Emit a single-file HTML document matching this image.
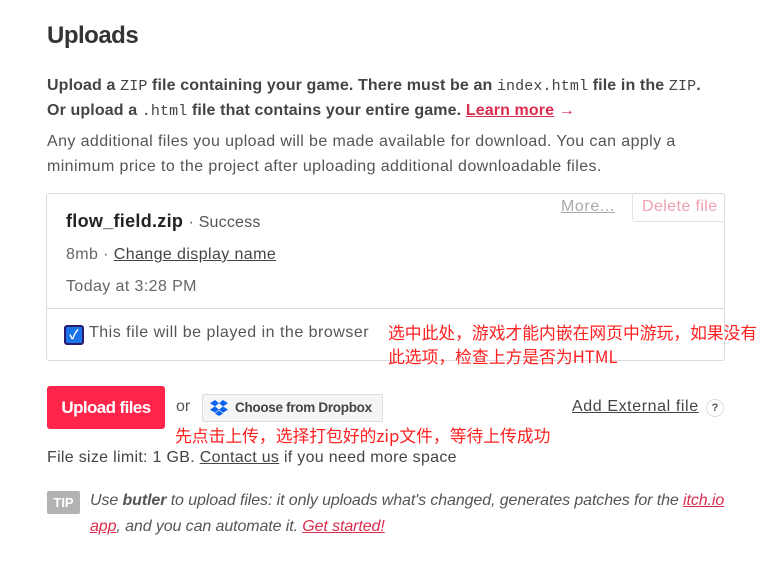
<!DOCTYPE html>
<html><head><meta charset="utf-8"><style>
body{margin:0;width:783px;height:569px;background:#fff;font-family:"Liberation Sans","Noto Sans CJK SC",sans-serif;color:#434343;position:relative;overflow:hidden}
.a{position:absolute;white-space:nowrap}
code{font-family:"Liberation Mono",monospace;font-weight:normal;font-size:15px}
u{text-decoration:underline}
.red{color:#ff2020;font-size:16.8px;font-family:"Noto Sans CJK SC",sans-serif}
</style></head><body>
<div class="a" style="left:47px;top:22px;font-size:24px;font-weight:bold;color:#333;letter-spacing:-0.5px">Uploads</div>
<div class="a" style="left:47px;top:77px;font-size:16px;font-weight:bold;letter-spacing:0.12px;color:#444">Upload a <code>ZIP</code> file containing your game. There must be an <code>index.html</code> file in the <code>ZIP</code>.</div>
<div class="a" style="left:47px;top:102px;font-size:16px;font-weight:bold;letter-spacing:0.12px;color:#444">Or upload a <code>.html</code> file that contains your entire game. <u style="color:#da2c4d">Learn more</u> <span style="color:#da2c4d">→</span></div>
<div class="a" style="left:47px;top:133px;font-size:16px;letter-spacing:0.4px;color:#555">Any additional files you upload will be made available for download. You can apply a</div>
<div class="a" style="left:47px;top:158px;font-size:16px;letter-spacing:0.4px;color:#555">minimum price to the project after uploading additional downloadable files.</div>

<div class="a" style="left:46px;top:193px;width:677px;height:166px;border:1px solid #dadada;border-radius:3px"></div>
<div class="a" style="left:46px;top:308px;width:679px;height:1px;background:#dadada"></div>
<div class="a" style="left:632px;top:193px;width:91px;height:28px;border-left:1px solid #e4e4e4;border-bottom:1px solid #e4e4e4;border-radius:0 0 0 3px"></div>
<div class="a" style="left:642px;top:198px;font-size:16px;color:#f0a0b0;letter-spacing:0.4px">Delete file</div>
<div class="a" style="left:561px;top:198px;font-size:16px;color:#aaa;letter-spacing:0.6px"><u>More...</u></div>
<div class="a" style="left:66px;top:211px;font-size:18px;font-weight:bold;color:#222;letter-spacing:0.3px">flow_field.zip <span style="font-weight:normal;font-size:16px;color:#555;letter-spacing:0.2px">· Success</span></div>
<div class="a" style="left:66px;top:246px;font-size:16px;color:#666;letter-spacing:0.4px">8mb · <u style="color:#444">Change display name</u></div>
<div class="a" style="left:66px;top:278px;font-size:16px;color:#666;letter-spacing:0.4px">Today at 3:28 PM</div>
<div class="a" style="left:64px;top:325px;width:16px;height:16px;border:2px solid #2c1a6e;border-radius:3px;background:#1a73e8;color:#fff;font-size:13px;line-height:16px;text-align:center;font-weight:bold">✓</div>
<div class="a" style="left:89px;top:324px;font-size:16px;color:#555;letter-spacing:0.5px">This file will be played in the browser</div>
<div class="a red" style="left:388px;top:320px;line-height:24px">选中此处，游戏才能内嵌在网页中游玩，如果没有<br>此选项，检查上方是否为HTML</div>

<div class="a" style="left:47px;top:386px;width:118px;height:43px;background:#ff2449;border-radius:3px;color:#fff;font-size:17px;font-weight:bold;line-height:43px;text-align:center;letter-spacing:-0.6px">Upload files</div>
<div class="a" style="left:176px;top:398px;font-size:16px;color:#555">or</div>
<div class="a" style="left:202px;top:394px;width:179px;height:26px;background:#f5f5f5;border:1px solid #ddd;border-radius:2px"></div>
<svg class="a" style="left:210px;top:400px" width="18" height="16" viewBox="0 0 18 16"><g fill="#0d62f0"><path d="M5 0 0 3.2 5 6.4 9 3.2z"/><path d="M13 0 9 3.2 13 6.4 18 3.2z"/><path d="M0 9.6 5 12.8 9 9.6 5 6.4z"/><path d="M13 6.4 9 9.6 13 12.8 18 9.6z"/><path d="M5 13.6 9 10.4 13 13.6 9 16z"/></g></svg>
<div class="a" style="left:235px;top:400px;font-size:13.5px;color:#444;font-weight:bold;letter-spacing:-0.3px">Choose from Dropbox</div>
<div class="a" style="left:572px;top:398px;font-size:16px;color:#444;letter-spacing:0.6px"><u>Add External file</u></div>
<div class="a" style="left:706px;top:399px;width:16px;height:16px;border:1px solid #ddd;border-radius:50%;font-size:11px;text-align:center;line-height:16px;color:#555;font-weight:bold">?</div>
<div class="a red" style="left:175px;top:423px">先点击上传，选择打包好的zip文件，等待上传成功</div>
<div class="a" style="left:47px;top:449px;font-size:16px;color:#444;letter-spacing:0.3px">File size limit: 1 GB. <u>Contact us</u> if you need more space</div>
<div class="a" style="left:47px;top:491px;width:33px;height:23px;background:#b3b3b3;border-radius:2px;color:#fff;font-size:13px;font-weight:bold;text-align:center;line-height:23px">TIP</div>
<div class="a" style="left:90px;top:492px;font-size:16px;font-style:italic;color:#555;letter-spacing:-0.1px">Use <b>butler</b> to upload files: it only uploads what's changed, generates patches for the <u style="color:#da2c4d">itch.io</u></div>
<div class="a" style="left:90px;top:518px;font-size:16px;font-style:italic;color:#555;letter-spacing:-0.1px"><u style="color:#da2c4d">app</u>, and you can automate it. <u style="color:#da2c4d">Get started!</u></div>
</body></html>
